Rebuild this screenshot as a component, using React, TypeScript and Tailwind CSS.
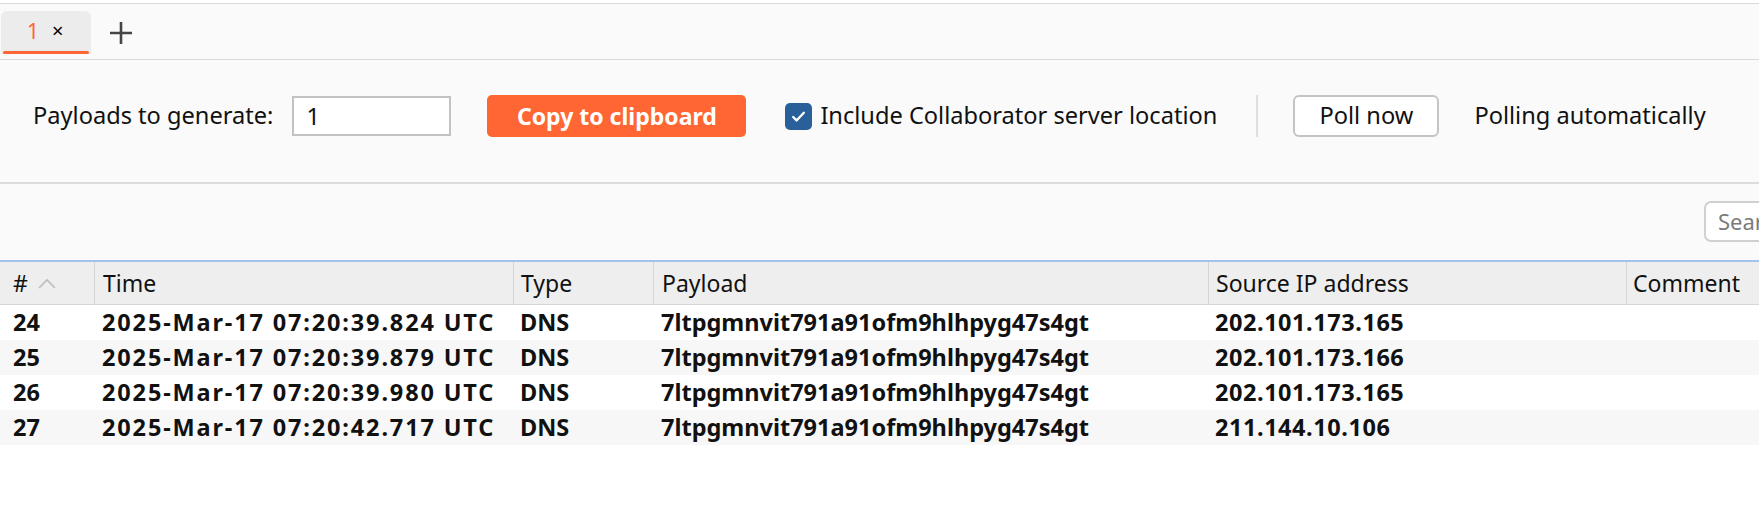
import { useState } from "react";

type Interaction = {
  id: number;
  time: string;
  type: string;
  payload: string;
  source: string;
  comment: string;
};

const rows: Interaction[] = [
  { id: 24, time: "2025-Mar-17 07:20:39.824 UTC", type: "DNS", payload: "7ltpgmnvit791a91ofm9hlhpyg47s4gt", source: "202.101.173.165", comment: "" },
  { id: 25, time: "2025-Mar-17 07:20:39.879 UTC", type: "DNS", payload: "7ltpgmnvit791a91ofm9hlhpyg47s4gt", source: "202.101.173.166", comment: "" },
  { id: 26, time: "2025-Mar-17 07:20:39.980 UTC", type: "DNS", payload: "7ltpgmnvit791a91ofm9hlhpyg47s4gt", source: "202.101.173.165", comment: "" },
  { id: 27, time: "2025-Mar-17 07:20:42.717 UTC", type: "DNS", payload: "7ltpgmnvit791a91ofm9hlhpyg47s4gt", source: "211.144.10.106", comment: "" },
];

const cols = "grid grid-cols-[94px_419px_140px_555px_418px_1fr]";

const App = () => {
  const [count, setCount] = useState("1");
  const [includeLocation, setIncludeLocation] = useState(true);

  return (
    <div className="w-full h-[525px] bg-white text-[#111] font-['Noto_Sans',sans-serif] overflow-hidden">
      <div className="h-[3px] bg-white" />

      {/* tab strip */}
      <div className="h-[57px] bg-[#fafafa] border-t border-b border-[#d9d9d9] flex items-start">
        <div className="ml-px mt-[7px] w-[90px] h-[43px] bg-[#ececec] rounded-t-[6px] flex flex-col">
          <div className="flex-1 flex items-center pl-[26px] gap-[13px]">
            <span className="text-[21px] leading-none text-[#ff6633]">1</span>
            <span className="text-[20px] leading-none text-black">×</span>
          </div>
          <div className="h-[3px] mx-[2px] rounded-full bg-[#ff6633]" />
        </div>
        <button className="ml-[18px] mt-[17px] w-[24px] h-[24px] flex items-center justify-center">
          <svg width="24" height="24" viewBox="0 0 24 24">
            <path d="M12 1v22M1 12h22" stroke="#454545" strokeWidth="2.6" />
          </svg>
        </button>
      </div>

      {/* controls */}
      <div className="h-[124px] bg-[#fafafa] border-b-2 border-[#dcdcdc] flex items-start pt-[35px] text-[23.6px]">
        <span className="ml-[33px] h-[42px] flex items-center">Payloads to generate:</span>
        <input
          value={count}
          onChange={(e) => setCount(e.target.value)}
          className="ml-[19px] mt-px w-[159px] h-[40px] border-2 border-[#c2c2c2] bg-white px-[12px] text-[23.6px] outline-none"
        />
        <button className="ml-[36px] w-[259px] h-[42px] rounded-[5px] bg-[#ff6633] text-white font-bold text-[23px]">
          Copy to clipboard
        </button>
        <label className="ml-[39px] h-[42px] flex items-center gap-[8px]">
          <span
            onClick={() => setIncludeLocation(!includeLocation)}
            className="w-[27px] h-[27px] rounded-[5px] bg-[#2a6099] flex items-center justify-center"
          >
            {includeLocation && (
              <svg width="17" height="17" viewBox="0 0 16 16">
                <path d="M3 8.5l3.2 3.2L13 4.5" stroke="white" strokeWidth="2.2" fill="none" strokeLinecap="round" strokeLinejoin="round" />
              </svg>
            )}
          </span>
          <span>Include Collaborator server location</span>
        </label>
        <div className="ml-[39px] w-[2px] h-[42px] bg-[#dedede]" />
        <button className="ml-[35px] w-[146px] h-[42px] rounded-[6px] border-2 border-[#c4c4c4] bg-white text-[23.6px]">
          Poll now
        </button>
        <span className="ml-[35px] h-[42px] flex items-center">Polling automatically</span>
      </div>

      {/* search strip */}
      <div className="h-[78px] bg-[#fafafa] border-b-2 border-[#a3c4ea] flex justify-end items-start pt-[17px] overflow-hidden">
        <div className="w-[55px] h-[41px] border-2 border-r-0 border-[#d0d0d0] rounded-l-[7px] bg-white flex items-center pl-[12px] text-[22px] text-[#7a7a7a] overflow-hidden whitespace-nowrap">
          Search
        </div>
      </div>

      {/* table */}
      <div className={`${cols} h-[43px] bg-[#eeeeee] border-b border-[#d6d6d6] text-[23px]`}>
        <div className="flex items-center pl-[13px] gap-[10px]">
          #
          <svg width="18" height="11" viewBox="0 0 18 11">
            <path d="M1 10L9 2l8 8" stroke="#bdbdbd" strokeWidth="1.6" fill="none" />
          </svg>
        </div>
        <div className="flex items-center pl-[8px] border-l border-[#d6d6d6]">Time</div>
        <div className="flex items-center pl-[7px] border-l border-[#d6d6d6]">Type</div>
        <div className="flex items-center pl-[8px] border-l border-[#d6d6d6]">Payload</div>
        <div className="flex items-center pl-[7px] border-l border-[#d6d6d6]">Source IP address</div>
        <div className="flex items-center pl-[6px] border-l border-[#d6d6d6]">Comment</div>
      </div>
      {rows.map((r, i) => (
        <div
          key={r.id}
          className={`${cols} h-[35px] font-bold text-[23.5px] ${i % 2 === 1 ? "bg-[#f7f7f7]" : "bg-white"}`}
        >
          <div className="flex items-center pl-[13px]">{r.id}</div>
          <div className="flex items-center pl-[8px] whitespace-nowrap tracking-[1.85px]">{r.time}</div>
          <div className="flex items-center pl-[7px]">{r.type}</div>
          <div className="flex items-center pl-[8px] whitespace-nowrap">{r.payload}</div>
          <div className="flex items-center pl-[7px] tracking-[0.55px]">{r.source}</div>
          <div className="flex items-center pl-[6px]">{r.comment}</div>
        </div>
      ))}
    </div>
  );
};

export default App;
